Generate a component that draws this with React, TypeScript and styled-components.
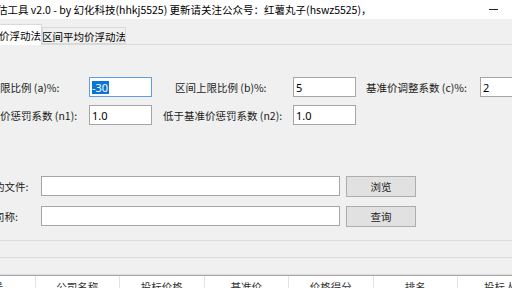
import React from "react";
import styled, { createGlobalStyle } from "styled-components";

const Global = createGlobalStyle`
  html, body { margin: 0; padding: 0; background: #f0f0f0; }
  body { font-family: "Noto Sans CJK SC", "Noto Sans", sans-serif; }
  * { box-sizing: border-box; }
`;

const Window = styled.div`
  width: 512px;
  height: 288px;
  overflow: hidden;
  background: #f0f0f0;
  display: flex;
  flex-direction: column;
  font-size: 10.5px;
  color: #000;
`;

const TitleBar = styled.div`
  height: 19px;
  flex: none;
  background: #ffffff;
  display: flex;
  align-items: center;
  justify-content: space-between;
  padding-right: 14px;
`;

const TitleText = styled.span`
  margin-left: -3px;
  white-space: nowrap;
  font-size: 10.5px;
  line-height: 19px;
`;

const MinBtn = styled.span`
  width: 9px;
  height: 1px;
  background: #222;
  margin-top: 0px;
`;

const TabStrip = styled.div`
  height: 26px;
  flex: none;
  display: flex;
  align-items: flex-end;
  border-bottom: 1px solid #d9d9d9;
`;

const Tab = styled.div<{ $active?: boolean; $w: number }>`
  width: ${(p) => p.$w}px;
  height: ${(p) => (p.$active ? 21 : 17)}px;
  margin-bottom: ${(p) => (p.$active ? -1 : 0)}px;
  background: ${(p) => (p.$active ? "#ffffff" : "#f0f0f0")};
  border: 1px solid #d9d9d9;
  border-bottom: ${(p) => (p.$active ? "none" : "1px solid #d9d9d9")};
  border-left: ${(p) => (p.$active ? "none" : "1px solid #d9d9d9")};
  display: flex;
  align-items: center;
  justify-content: ${(p) => (p.$active ? "flex-start" : "center")};
  white-space: nowrap;
  overflow: hidden;
  font-size: 10.5px;
  padding-top: ${(p) => (p.$active ? 0 : 1)}px;
`;

const TabLabel = styled.span<{ $shift?: number }>`
  margin-left: ${(p) => p.$shift ?? 0}px;
`;

const Panel = styled.div`
  height: 196px;
  flex: none;
  border-bottom: 1px solid #dcdcdc;
  padding-top: 31px;
  display: flex;
  flex-direction: column;
`;

const Row = styled.div<{ $mt?: number }>`
  display: flex;
  align-items: center;
  height: 22px;
  margin-top: ${(p) => p.$mt ?? 0}px;
  white-space: nowrap;
`;

const FieldLabel = styled.div<{ $w: number; $pl?: number; $shift?: number }>`
  width: ${(p) => p.$w}px;
  flex: none;
  padding-left: ${(p) => p.$pl ?? 0}px;
  overflow: hidden;
  white-space: nowrap;
  font-size: 10.5px;
  color: #1a1a1a;
  & > span {
    display: inline-block;
    margin-left: ${(p) => p.$shift ?? 0}px;
  }
`;

const Input = styled.div<{ $w: number; $focus?: boolean }>`
  width: ${(p) => p.$w}px;
  height: 20px;
  flex: none;
  background: #ffffff;
  border: 1px solid ${(p) => (p.$focus ? "#5a9fe0" : "#a5a5a5")};
  display: flex;
  align-items: center;
  padding-left: 2px;
  font-size: 11px;
  font-family: "Noto Sans", "Noto Sans CJK SC", sans-serif;
  color: #000;
`;

const Selected = styled.span`
  background: #0a74d6;
  color: #fff;
  line-height: 13px;
  padding: 0 1px 0 0;
`;

const Button = styled.div`
  width: 70px;
  height: 21px;
  flex: none;
  margin-left: 6px;
  background: #e1e1e1;
  border: 1px solid #adadad;
  display: flex;
  align-items: center;
  justify-content: center;
  font-size: 10.5px;
  color: #222;
`;

const Strip = styled.div`
  height: 17px;
  flex: none;
  border-bottom: 1px solid #dcdcdc;
`;

const GridTop = styled.div`
  flex: 1;
  border-top: 1px solid #a8a8a8;
  background: #ffffff;
  overflow: hidden;
`;

const HeaderRow = styled.div`
  display: grid;
  grid-template-columns: repeat(7, 84.5px);
  margin-left: -49px;
  height: 20px;
`;

const HeaderCell = styled.div`
  border-right: 1px solid #e3e3e3;
  display: flex;
  justify-content: center;
  padding-top: 3px;
  font-size: 10.5px;
  color: #333;
  white-space: nowrap;
`;

const headers = ["序号", "公司名称", "投标价格", "基准价", "价格得分", "排名", "投标人"];

export default function App() {
  return (
    <>
      <Global />
      <Window>
        <TitleBar>
          <TitleText>估工具 v2.0 - by 幻化科技(hhkj5525) 更新请关注公众号：红薯丸子(hswz5525)，</TitleText>
          <MinBtn />
        </TitleBar>
        <TabStrip>
          <Tab $active $w={42}>
            <TabLabel $shift={-1}>价浮动法</TabLabel>
          </Tab>
          <Tab $w={84}>
            <TabLabel>区间平均价浮动法</TabLabel>
          </Tab>
        </TabStrip>
        <Panel>
          <Row>
            <FieldLabel $w={89}><span>限比例 (a)%:</span></FieldLabel>
            <Input $w={63} $focus><Selected>-30</Selected></Input>
            <FieldLabel $w={141} $pl={23}><span>区间上限比例 (b)%:</span></FieldLabel>
            <Input $w={63}>5</Input>
            <FieldLabel $w={124} $pl={10}><span>基准价调整系数 (c)%:</span></FieldLabel>
            <Input $w={60}>2</Input>
          </Row>
          <Row $mt={6}>
            <FieldLabel $w={89}><span>价惩罚系数 (n1):</span></FieldLabel>
            <Input $w={63}>1.0</Input>
            <FieldLabel $w={141} $pl={11}><span>低于基准价惩罚系数 (n2):</span></FieldLabel>
            <Input $w={63}>1.0</Input>
          </Row>
          <Row $mt={49}>
            <FieldLabel $w={41} $shift={-6}><span>的文件:</span></FieldLabel>
            <Input $w={299} />
            <Button>浏览</Button>
          </Row>
          <Row $mt={8}>
            <FieldLabel $w={41} $shift={-6}><span>司称:</span></FieldLabel>
            <Input $w={299} />
            <Button>查询</Button>
          </Row>
        </Panel>
        <Strip />
        <Strip />
        <GridTop>
          <HeaderRow>
            {headers.map((h) => (
              <HeaderCell key={h}>{h}</HeaderCell>
            ))}
          </HeaderRow>
        </GridTop>
      </Window>
    </>
  );
}
